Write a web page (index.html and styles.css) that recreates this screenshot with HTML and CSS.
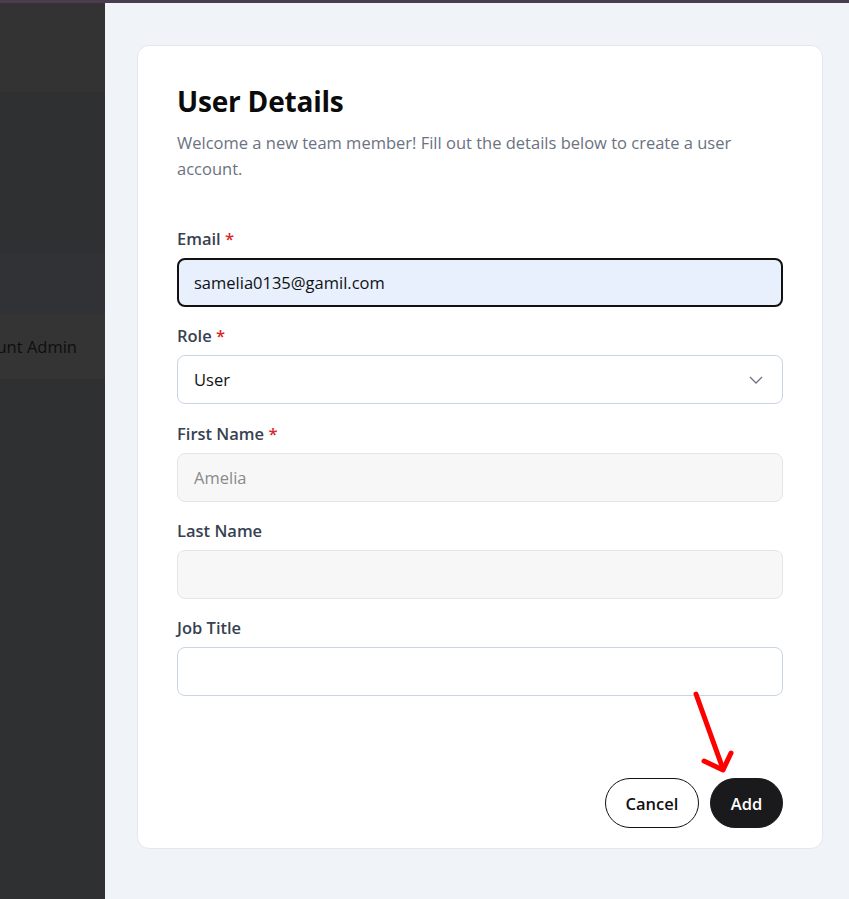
FILE: index.html
```html
<!DOCTYPE html>
<html>
<head>
<meta charset="utf-8">
<link rel="stylesheet" href="styles.css">
</head>
<body>
<div class="topbar"></div>
<div class="app">
  <aside class="backdrop">
    <div class="band band-a"></div>
    <div class="band band-b"></div>
    <div class="band band-c"></div>
    <div class="band band-d"><span class="cut">Account Admin</span></div>
    <div class="band band-e"></div>
  </aside>
  <main class="sheet">
    <section class="card">
      <h1 class="title">User Details</h1>
      <p class="subtitle">Welcome a new team member! Fill out the details below to create a user account.</p>
      <form class="form">
        <div class="field">
          <label class="label">Email <span class="req">*</span></label>
          <div class="input input-focus">samelia0135@gamil.com</div>
        </div>
        <div class="field">
          <label class="label">Role <span class="req">*</span></label>
          <div class="input select">
            <span>User</span>
            <svg class="chev" width="14" height="8" viewBox="0 0 14 8"><path d="M1 1l6 6 6-6" fill="none" stroke="#6b7280" stroke-width="1.3"/></svg>
          </div>
        </div>
        <div class="field">
          <label class="label">First Name <span class="req">*</span></label>
          <div class="input input-disabled">Amelia</div>
        </div>
        <div class="field">
          <label class="label">Last Name</label>
          <div class="input input-disabled"></div>
        </div>
        <div class="field">
          <label class="label">Job Title</label>
          <div class="input"></div>
        </div>
        <div class="actions">
          <button type="button" class="btn btn-cancel">Cancel</button>
          <button type="button" class="btn btn-add">Add</button>
        </div>
      </form>
    </section>
  </main>
</div>
<svg class="annot" width="849" height="899" viewBox="0 0 849 899">
  <g stroke="#ff0000" stroke-width="5" stroke-linecap="round" stroke-linejoin="round" fill="none">
    <path d="M696 694 L723 769"/>
    <path d="M704 761 L723 770 L731 753"/>
  </g>
</svg>
</body>
</html>
```
FILE: styles.css
```css
* { box-sizing: border-box; }
html, body { margin: 0; padding: 0; }
body {
  width: 849px;
  height: 899px;
  overflow: hidden;
  font-family: "Open Sans", "Noto Sans", sans-serif;
  background: #f0f3f8;
  position: relative;
}
.topbar { height: 3px; background: #4b3d4f; }
.app { display: flex; height: 896px; }
.backdrop {
  width: 105px;
  flex: none;
  display: flex;
  flex-direction: column;
  background: #2f3032;
  overflow: hidden;
}
.band { flex: none; }
.band-a { height: 89px; background: #333334; }
.band-b { height: 161px; background: #2f3032; }
.band-c { height: 60px; background: #313235; }
.band-d {
  height: 66px;
  background: #343434;
  display: flex;
  align-items: center;
  justify-content: flex-end;
  padding-right: 28px;
  overflow: hidden;
}
.cut { white-space: nowrap; color: #0e0e0e; font-size: 16.5px; flex: none; }
.band-e { flex: 1; }
.sheet {
  flex: 1;
  padding: 42px 26px 48px 32px;
}
.card {
  background: #fff;
  border: 1px solid #e3e7ee;
  border-radius: 12px;
  height: 804px;
  padding: 35px 39px 20px 39px;
  display: flex;
  flex-direction: column;
}
.title {
  margin: 0;
  font-size: 28px;
  font-weight: 700;
  line-height: 40px;
  color: #0b0b0b;
  letter-spacing: -0.2px;
}
.subtitle {
  margin: 9px 0 0 0;
  font-size: 16.5px;
  line-height: 26px;
  color: #6b7280;
}
.form {
  flex: 1;
  display: flex;
  flex-direction: column;
  gap: 17.3px;
  margin-top: 45px;
}
.field { display: flex; flex-direction: column; gap: 7px; }
.label {
  font-size: 16.5px;
  line-height: 24px;
  font-weight: 600;
  color: #374151;
}
.req { color: #dc2626; }
.input {
  height: 49px;
  border: 1px solid #cbd5e1;
  border-radius: 8px;
  background: #fff;
  display: flex;
  align-items: center;
  padding: 0 16px;
  font-size: 16.5px;
  color: #111;
}
.input-focus {
  border: 2px solid #111;
  background: #e8f0fe;
  padding-left: 15px;
}
.input-disabled {
  background: #f7f7f7;
  border-color: #e2e6ec;
  color: #8a8a8a;
}
.select { justify-content: space-between; padding-right: 19px; }
.chev { display: block; }
.actions {
  margin-top: auto;
  display: flex;
  justify-content: flex-end;
  gap: 11px;
}
.btn {
  height: 50px;
  border-radius: 25px;
  font-family: inherit;
  font-size: 16.5px;
  font-weight: 600;
  padding: 0;
  cursor: pointer;
}
.btn-cancel { background: #fff; border: 1px solid #111; color: #111; width: 94px; }
.btn-add { background: #1a1a1c; border: 1px solid #1a1a1c; color: #fff; width: 73px; }
.annot { position: absolute; left: 0; top: 0; pointer-events: none; }
```
